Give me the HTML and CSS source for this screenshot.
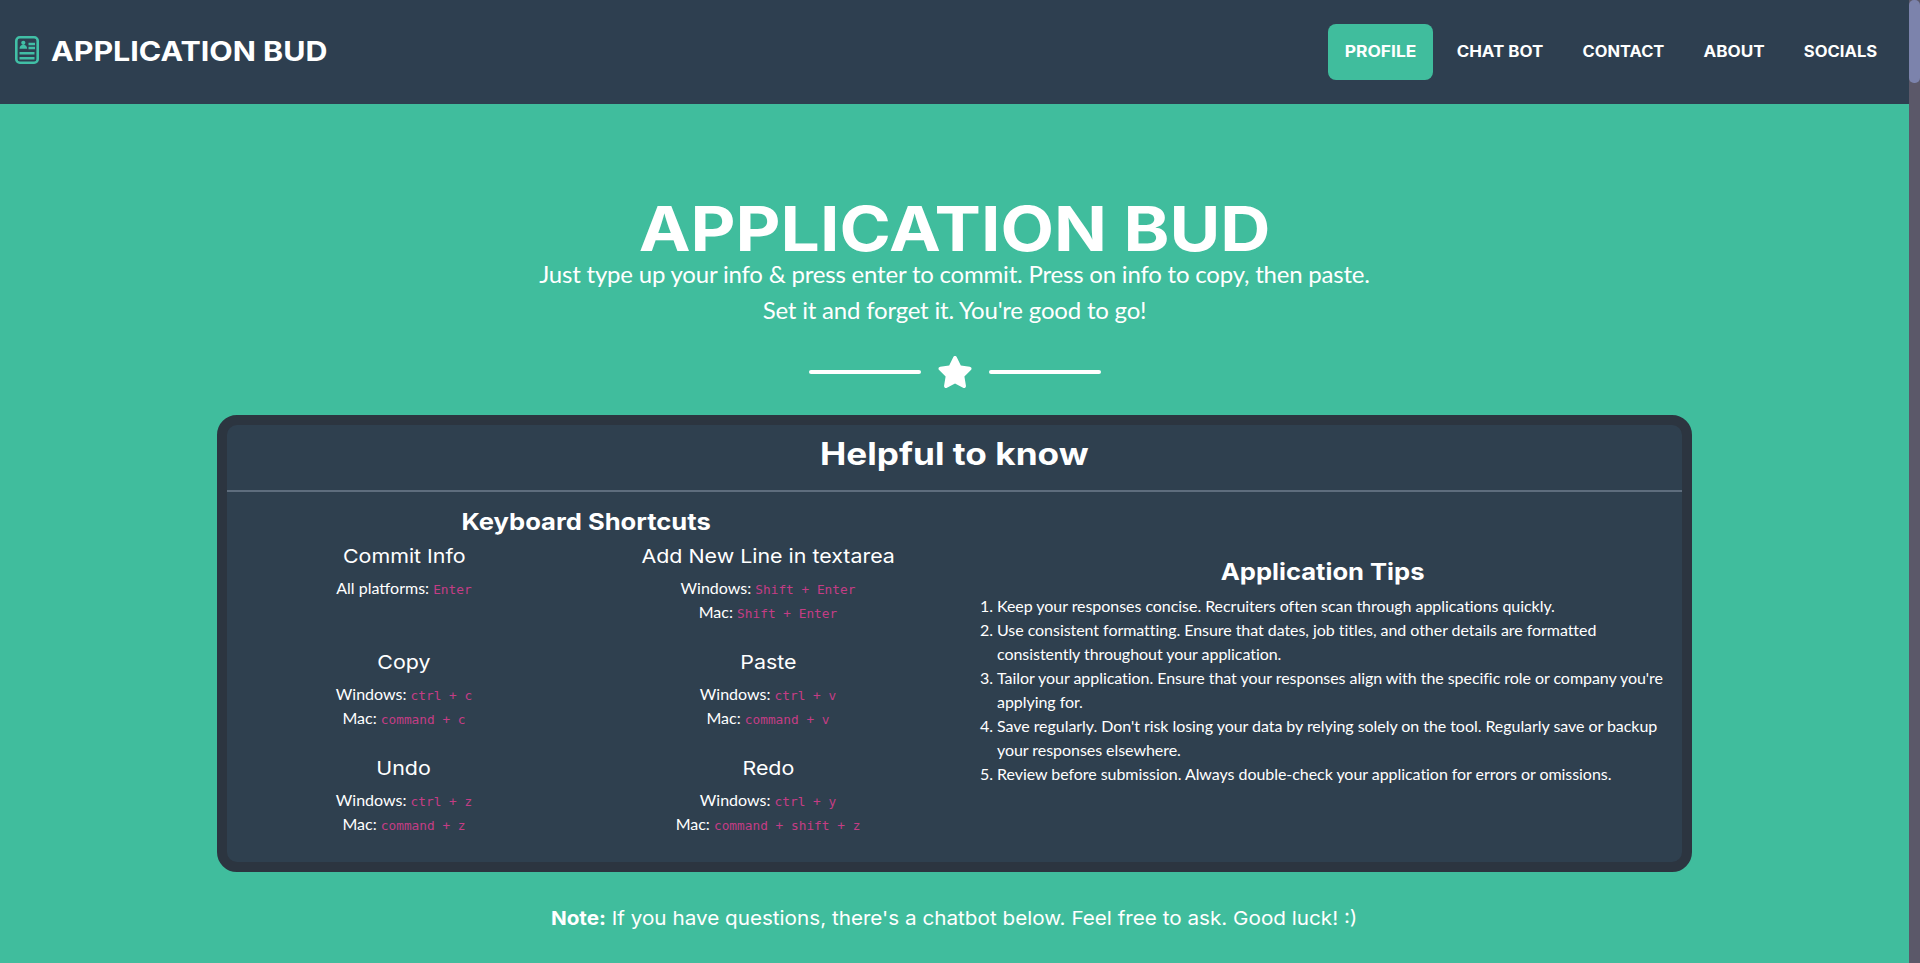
FILE: index.html
```html
<!DOCTYPE html>
<html lang="en">
<head>
<meta charset="utf-8">
<title>Application Bud</title>
<link rel="stylesheet" href="styles.css">
</head>
<body>
<div class="page">
  <nav class="navbar">
    <a class="brand">
      <svg class="brand-icon" viewBox="0 0 24 28" fill="none" stroke="#41bfa6">
        <rect x="1.300" y="1.300" width="21.400" height="25.400" rx="3.500" stroke-width="2.600"/>
        <circle cx="8.300" cy="6.800" r="2.100" fill="#41bfa6" stroke="none"/>
        <path d="M4.500 12.800c0-2.800 1.700-4 3.800-4s3.800 1.200 3.800 4z" fill="#41bfa6" stroke="none"/>
        <path d="M13.500 8h6.500M13.500 12h6.500M4.500 17.300h15M4.500 22.300h15" stroke-width="2.400"/>
      </svg>
      <span class="brand-text">APPLICATION BUD</span>
    </a>
    <ul class="menu">
      <li class="item active"><span class="label profile">PROFILE</span></li>
      <li class="item"><span class="label chat">CHAT BOT</span></li>
      <li class="item"><span class="label contact">CONTACT</span></li>
      <li class="item"><span class="label about">ABOUT</span></li>
      <li class="item"><span class="label socials">SOCIALS</span></li>
    </ul>
  </nav>
  <main class="hero">
    <h1 class="title"><span>APPLICATION BUD</span></h1>
    <p class="lead">Just type up your info &amp; press enter to commit. Press on info to copy, then paste.<br>Set it and forget it. You're good to go!</p>
    <div class="divider">
      <span class="line"></span>
      <svg class="star" viewBox="0 0 576 512"><path fill="#fff" d="M316.9 18C311.6 7 300.4 0 288.100 0s-23.400 7-28.800 18L195 150.300 51.400 171.500c-12 1.800-22 10.200-25.700 21.700s-.7 24.200 7.900 32.700L137.800 329 113.200 474.700c-2 12 3 24.200 12.900 31.300s23 8 33.800 2.300l128.300-68.500 128.300 68.500c10.800 5.700 23.900 4.900 33.800-2.300s14.900-19.300 12.900-31.300L438.500 329 542.700 225.900c8.600-8.500 11.700-21.200 7.900-32.700s-13.700-19.900-25.700-21.700L381.200 150.300 316.900 18z"/></svg>
      <span class="line"></span>
    </div>
    <section class="panel">
      <h2 class="panel-title"><span>Helpful to know</span></h2>
      <div class="columns">
        <div class="shortcuts">
          <h3 class="sub"><span>Keyboard Shortcuts</span></h3>
          <div class="grid">
            <div class="cell"><h4><span>Commit Info</span></h4><p>All platforms: <code>Enter</code></p></div>
            <div class="cell"><h4><span>Add New Line in textarea</span></h4><p>Windows: <code>Shift + Enter</code></p><p>Mac: <code>Shift + Enter</code></p></div>
            <div class="cell"><h4><span>Copy</span></h4><p>Windows: <code>ctrl + c</code></p><p>Mac: <code>command + c</code></p></div>
            <div class="cell"><h4><span>Paste</span></h4><p>Windows: <code>ctrl + v</code></p><p>Mac: <code>command + v</code></p></div>
            <div class="cell"><h4><span>Undo</span></h4><p>Windows: <code>ctrl + z</code></p><p>Mac: <code>command + z</code></p></div>
            <div class="cell"><h4><span>Redo</span></h4><p>Windows: <code>ctrl + y</code></p><p>Mac: <code>command + shift + z</code></p></div>
          </div>
        </div>
        <div class="tips">
          <h3 class="sub"><span>Application Tips</span></h3>
          <ol class="list">
            <li>Keep your responses concise. Recruiters often scan through applications quickly.</li>
            <li>Use consistent formatting. Ensure that dates, job titles, and other details are formatted consistently throughout your application.</li>
            <li>Tailor your application. Ensure that your responses align with the specific role or company you're applying for.</li>
            <li>Save regularly. Don't risk losing your data by relying solely on the tool. Regularly save or backup your responses elsewhere.</li>
            <li>Review before submission. Always double-check your application for errors or omissions.</li>
          </ol>
        </div>
      </div>
    </section>
    <p class="note"><span><b>Note:</b> If you have questions, there's a chatbot below. Feel free to ask. Good luck! :)</span></p>
  </main>
</div>
<div class="scrollbar"><div class="thumb"></div></div>
</body>
</html>
```
FILE: styles.css
```css
* { box-sizing: border-box; margin: 0; padding: 0; }
body { display: flex; width: 1920px; height: 963px; overflow: hidden; background: #40bd9d; color: #fff; font: 16px/24px Lato, sans-serif; }
.page { width: 1909px; }
.scrollbar { width: 11px; height: 963px; background: #5b5869; }
.thumb { height: 83px; background: #7c83ac; border-radius: 5px; }

.navbar { display: flex; justify-content: space-between; align-items: center; height: 104px; padding: 0 16px 0 15px; background: #2e3f50; }
.brand { display: flex; align-items: center; font: 700 27px/42px Inter, sans-serif; }
.brand-icon { width: 24px; height: 28px; margin: 0 12px 4px 0; }
.brand-text { transform: scaleX(1.126); transform-origin: left; }
.menu { display: flex; gap: 8px; list-style: none; }
.item { padding: 16px; border-radius: 8px; font: 700 15.400px/24px Inter, sans-serif; }
.active { background: #40bd9d; }
.label { display: flex; justify-content: center; white-space: nowrap; }
.profile { width: 73px; transform: scaleX(1.13); }
.chat { width: 86px; transform: scaleX(1.1); }
.contact { width: 81px; transform: scaleX(1.07); }
.about { width: 60px; transform: scaleX(1.11); }
.socials { width: 73px; transform: scaleX(1.08); }

.hero { text-align: center; }
.title { height: 64px; margin-top: 93px; font: 700 61.500px/64px Inter, sans-serif; }
.title span, .panel-title span, .sub span, .cell h4 span, .note span { display: inline-block; white-space: nowrap; }
.title span { transform: scaleX(1.13); }
.lead { margin-top: -5px; font-size: 24px; line-height: 36px; letter-spacing: -0.2px; }
.divider { display: flex; justify-content: center; align-items: center; gap: 16px; height: 40px; margin-top: 24px; }
.line { width: 112px; height: 4px; border-radius: 4px; background: #fff; }
.star { width: 36px; height: 32px; }

.panel { width: 1475px; height: 457px; margin: 23px auto 0; border: 10px solid #2c3540; border-radius: 20px; background: #2f404f; }
.panel-title { height: 67px; padding-top: 10px; border-bottom: 2px solid #5e6d7d; font: 700 31px/38px Inter, sans-serif; }
.panel-title span { transform: scaleX(1.135); }
.columns { display: flex; }
.shortcuts { width: 728px; flex: none; margin-left: -5px; }
.sub { height: 29px; font: 700 23px/29px Inter, sans-serif; }
.sub span { transform: scaleX(1.112); }
.shortcuts .sub { margin: 16px 0 7px; }
.grid { display: grid; grid-template-columns: 1fr 1fr; grid-auto-rows: 106px; }
.cell h4 { height: 24px; margin-bottom: 8px; font: 400 19.300px/24px Inter, sans-serif; }
.cell h4 span { transform: scaleX(1.11); }
code { color: #c43d85; font: 12.800px/1 "DejaVu Sans Mono", monospace; }
.tips { width: 746px; flex: none; padding: 66px 15px 0; }
.tips .sub { margin-bottom: 7px; }
.list { padding-left: 32px; text-align: left; letter-spacing: -0.05px; }
.note { margin-top: 34px; font: 400 19.300px/24px Inter, sans-serif; }
.note span { transform: scaleX(1.072); }
```
